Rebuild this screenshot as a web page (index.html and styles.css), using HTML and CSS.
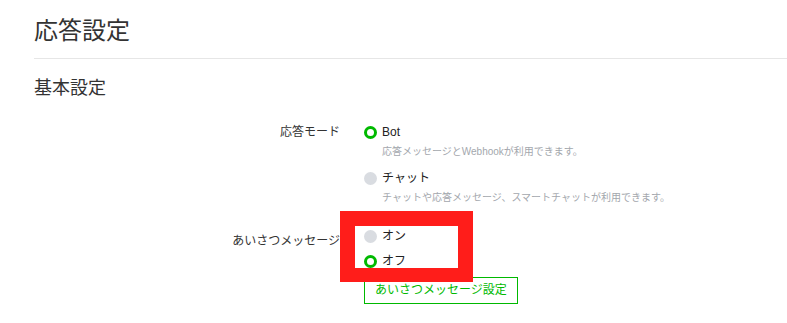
FILE: index.html
```html
<!DOCTYPE html>
<html lang="ja">
<head>
<meta charset="utf-8">
<title>応答設定</title>
<link rel="stylesheet" href="styles.css">
</head>
<body>
<div class="page">
    <h1 class="title">応答設定</h1>
    <div class="rule"></div>
    <h2 class="section">基本設定</h2>

    <div class="row">
        <div class="label">応答モード</div>
        <div class="field">
            <div class="opt"><span class="radio on"></span>Bot</div>
            <div class="desc">応答メッセージとWebhookが利用できます。</div>
            <div class="opt opt-next"><span class="radio"></span>チャット</div>
            <div class="desc">チャットや応答メッセージ、スマートチャットが利用できます。</div>
        </div>
    </div>

    <div class="row row-greet">
        <div class="label label-low">あいさつメッセージ</div>
        <div class="field">
            <div class="opt"><span class="radio"></span>オン</div>
            <div class="opt opt-tight"><span class="radio on"></span>オフ</div>
            <a class="btn" href="#">あいさつメッセージ設定</a>
        </div>
    </div>

    <!-- 注釈の赤枠 -->
    <div class="mark"></div>
</div>
</body>
</html>
```

FILE: styles.css
```css
body,div,h1,h2{margin:0;padding:0;}
body{background:#fff;color:#333;font-family:"Helvetica Neue","Liberation Sans","Noto Sans CJK JP",sans-serif;}
.page{position:relative;width:787px;height:323px;padding:15px 0 0 34px;box-sizing:border-box;overflow:hidden;}
.title{font-size:24px;line-height:32px;font-weight:normal;color:#333;}
.rule{height:1px;background:#e6e6e6;margin-top:11px;}
.section{font-size:18px;line-height:24px;font-weight:normal;margin-top:17px;color:#333;}

.row{display:flex;gap:24px;margin-top:22px;}
.row-greet{margin-top:20px;}
.label{width:306px;text-align:right;font-size:12px;line-height:20px;color:#333;flex:none;}
.label-low{padding-top:5px;}
.field{display:flex;flex-direction:column;align-items:flex-start;}

.opt{display:flex;align-items:center;gap:5px;font-size:12px;line-height:20px;color:#222;}
.opt-next{margin-top:8px;}
.opt-tight{margin-top:5px;}
.radio{width:13px;height:13px;border-radius:50%;background:#d9dce1;box-sizing:border-box;flex:none;}
.radio.on{background:#fff;border:3px solid #00b900;}
.desc{font-size:10px;line-height:16px;color:#a3a7ad;margin:2px 0 0 18px;}

.btn{display:block;margin-top:6px;height:27px;line-height:25px;padding:0 10px;border:1px solid #00b900;box-sizing:border-box;color:#00b900;font-size:12px;text-decoration:none;}

.mark{position:absolute;left:340px;top:211px;width:103px;height:42px;border:15px solid #ff1d1a;border-bottom-width:14px;}
```
